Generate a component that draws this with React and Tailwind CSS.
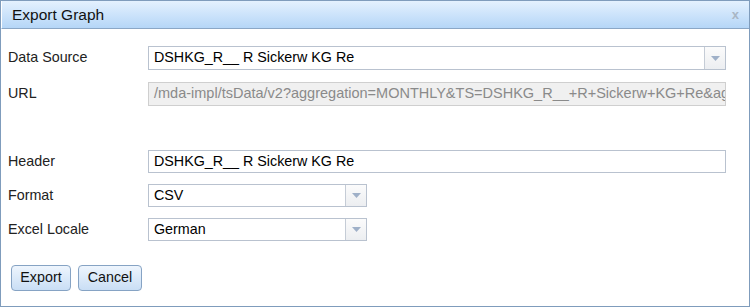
import React from 'react';

const Arrow = () => (
  <div className="w-[21px] h-full border-l border-[#c5ccd6] bg-gradient-to-b from-[#fbfbfb] to-[#eceef1] flex items-center justify-center">
    <svg width="9" height="5" viewBox="0 0 9 5">
      <path d="M0 0 L9 0 L4.5 5 Z" fill="#9fb0c8" />
    </svg>
  </div>
);

const Row = ({ label, children, className }) => (
  <div className={`flex items-center ${className || ''}`}>
    <div className="w-[140px] text-[14.3px] text-[#222]">{label}</div>
    {children}
  </div>
);

const App = () => {
  return (
    <div className="w-[750px] h-[307px] bg-white border border-[#7f9cbc] flex flex-col" style={{ fontFamily: '"Liberation Sans", Arial, sans-serif' }}>
      {/* Title bar */}
      <div className="h-[28px] flex items-center justify-between pl-[10px] pr-[10px] bg-gradient-to-b from-[#e4f1fe] to-[#b5d6f7] border-b border-[#8ba7c6] border-l border-l-white shrink-0">
        <span className="text-[15.5px] text-[#111]">Export Graph</span>
        <span className="text-[13px] font-bold text-[#a9b6c4]">x</span>
      </div>

      <div className="pl-[7px] pt-[17px] flex flex-col">
        <Row label="Data Source">
          <div className="w-[578px] h-[24px] border border-[#b9c2cf] flex items-center">
            <div className="flex-1 pl-[5px] text-[14.3px] text-black">DSHKG_R__ R Sickerw KG Re</div>
            <Arrow />
          </div>
        </Row>

        <Row label="URL" className="mt-[12px]">
          <div className="w-[578px] h-[24px] border border-[#cfcfcf] bg-[#f0f0f0] flex items-center overflow-hidden whitespace-nowrap pl-[5px] text-[14.5px] text-[#8a8a8a]">
            /mda-impl/tsData/v2?aggregation=MONTHLY&amp;TS=DSHKG_R__+R+Sickerw+KG+Re&amp;agg
          </div>
        </Row>

        <Row label="Header" className="mt-[44px]">
          <div className="w-[578px] h-[23px] border border-[#b9c2cf] flex items-center pl-[5px] text-[14.3px] text-black">
            DSHKG_R__ R Sickerw KG Re
          </div>
        </Row>

        <Row label="Format" className="mt-[11px]">
          <div className="w-[219px] h-[23px] border border-[#b9c2cf] flex items-center">
            <div className="flex-1 pl-[5px] text-[14.3px] text-black">CSV</div>
            <Arrow />
          </div>
        </Row>

        <Row label="Excel Locale" className="mt-[11px]">
          <div className="w-[219px] h-[23px] border border-[#b9c2cf] flex items-center">
            <div className="flex-1 pl-[5px] text-[14.3px] text-black">German</div>
            <Arrow />
          </div>
        </Row>

        <div className="flex gap-[7px] mt-[24px] pl-[3px]">
          <button className="w-[60px] h-[26px] rounded-[4px] border border-[#86a3c4] bg-gradient-to-b from-[#eef5fd] to-[#c9def5] text-[14.3px] text-[#111]">
            Export
          </button>
          <button className="w-[64px] h-[26px] rounded-[4px] border border-[#86a3c4] bg-gradient-to-b from-[#eef5fd] to-[#c9def5] text-[14.3px] text-[#111]">
            Cancel
          </button>
        </div>
      </div>
    </div>
  );
};

export default App;
